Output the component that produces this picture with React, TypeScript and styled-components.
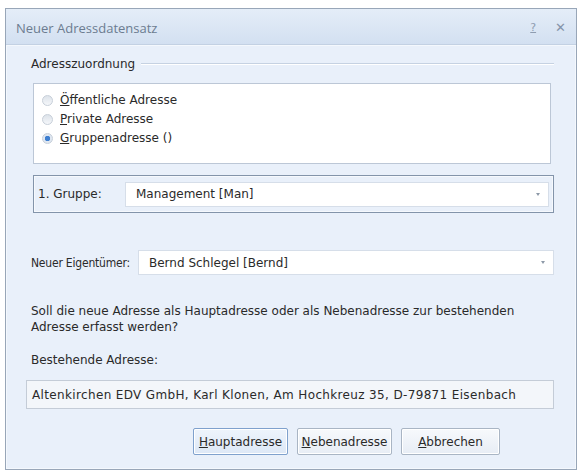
import React from "react";
import styled, { createGlobalStyle } from "styled-components";

const GlobalStyle = createGlobalStyle`
  html, body {
    margin: 0;
    padding: 0;
    background: #ffffff;
  }
  body {
    font-family: "DejaVu Sans", "Open Sans", sans-serif;
    font-size: 12px;
    line-height: 14px;
    color: #2a2a2a;
  }
`;

interface RadioOption {
  key: string;
  label: string;
  checked?: boolean;
}

const options: RadioOption[] = [
  { key: "Ö", label: "ffentliche Adresse" },
  { key: "P", label: "rivate Adresse" },
  { key: "G", label: "ruppenadresse ()", checked: true },
];

export default function App() {
  return (
    <>
      <GlobalStyle />
      <Page>
        <Window>
          <TitleBar>
            <Title>Neuer Adressdatensatz</Title>
            <TitleButtons>
              <HelpIcon>?</HelpIcon>
              <CloseIcon>✕</CloseIcon>
            </TitleButtons>
          </TitleBar>
          <Body>
            <GroupHeader>
              <span>Adresszuordnung</span>
              <HeaderLine />
            </GroupHeader>

            <RadioPanel>
              {options.map((o) => (
                <RadioRow key={o.key}>
                  <Radio checked={o.checked} />
                  <span>
                    <u>{o.key}</u>
                    {o.label}
                  </span>
                </RadioRow>
              ))}
            </RadioPanel>

            <GroupBox>
              <GroupLabel>1. Gruppe:</GroupLabel>
              <Combo>
                <span>Management [Man]</span>
                <Arrow />
              </Combo>
            </GroupBox>

            <OwnerRow>
              <OwnerLabel>Neuer Eigentümer:</OwnerLabel>
              <Combo>
                <span>Bernd Schlegel [Bernd]</span>
                <Arrow />
              </Combo>
            </OwnerRow>

            <Question>
              Soll die neue Adresse als Hauptadresse oder als Nebenadresse zur bestehenden
              <br />
              Adresse erfasst werden?
            </Question>

            <FieldLabel>Bestehende Adresse:</FieldLabel>
            <AddressBox>
              Altenkirchen EDV GmbH, Karl Klonen, Am Hochkreuz 35, D-79871 Eisenbach
            </AddressBox>

            <ButtonRow>
              <DialogButton focused>
                <u>H</u>auptadresse
              </DialogButton>
              <DialogButton>
                <u>N</u>ebenadresse
              </DialogButton>
              <DialogButton wide>
                <u>A</u>bbrechen
              </DialogButton>
            </ButtonRow>
          </Body>
        </Window>
      </Page>
    </>
  );
}

const Page = styled.div`
  padding: 8px 5px 3px 5px;
  height: 473px;
  box-sizing: border-box;
`;

const Window = styled.div`
  height: 100%;
  box-sizing: border-box;
  border: 1px solid #98a6b8;
  display: flex;
  flex-direction: column;
  background: #e9f0fa;
`;

const TitleBar = styled.div`
  height: 35px;
  flex-shrink: 0;
  display: flex;
  align-items: center;
  justify-content: space-between;
  padding: 0 10px 0 10px;
  background: linear-gradient(#e4edf8, #d3e0f1);
  border-bottom: 1px solid #c3d1e3;
`;

const Title = styled.div`
  font-family: "Open Sans", sans-serif;
  font-size: 13px;
  color: #6c7c90;
  padding-top: 2px;
`;

const TitleButtons = styled.div`
  display: flex;
  align-items: center;
  gap: 19px;
  padding-top: 2px;
`;

const HelpIcon = styled.span`
  font-size: 11px;
  color: #8e9cb0;
  text-decoration: underline;
`;

const CloseIcon = styled.span`
  font-size: 13px;
  color: #8594aa;
`;

const Body = styled.div`
  flex: 1;
  display: flex;
  flex-direction: column;
  padding: 11px 21px 0 19px;
  border: 1px solid #f4f8fd;
`;

const GroupHeader = styled.div`
  display: flex;
  align-items: center;
  gap: 6px;
  height: 14px;
  padding-left: 5px;
`;

const HeaderLine = styled.div`
  flex: 1;
  border-top: 1px solid #c6d2e2;
  border-bottom: 1px solid #ffffff;
`;

const RadioPanel = styled.div`
  margin: 12px 3px 0 7px;
  height: 81px;
  box-sizing: border-box;
  background: #ffffff;
  border: 1px solid #bcc7d6;
  padding: 8px 0 0 8px;
  display: flex;
  flex-direction: column;
  gap: 3px;
`;

const RadioRow = styled.div`
  display: flex;
  align-items: center;
  gap: 7px;
  height: 16px;
`;

const Radio = styled.span<{ checked?: boolean }>`
  width: 9px;
  height: 9px;
  border-radius: 50%;
  border: 1px solid #c7cfd9;
  background: ${(p) =>
    p.checked
      ? "radial-gradient(circle, #3e7fd0 0 2.5px, #dfe7f1 3px)"
      : "linear-gradient(#dde3ea, #f5f7fa)"};
`;

const GroupBox = styled.div`
  margin: 11px 0 0 7px;
  height: 38px;
  box-sizing: border-box;
  border: 1px solid #8394aa;
  box-shadow: inset 0 0 0 1px #f6f9fd;
  display: flex;
  align-items: center;
  padding: 0 4px 0 4px;
`;

const GroupLabel = styled.div`
  width: 87px;
  flex-shrink: 0;
`;

const Combo = styled.div`
  flex: 1;
  height: 25px;
  box-sizing: border-box;
  background: #ffffff;
  border: 1px solid #d6dee9;
  display: flex;
  align-items: center;
  justify-content: space-between;
  padding: 0 8px 0 10px;
`;

const Arrow = styled.span`
  width: 0;
  height: 0;
  border-left: 2px solid transparent;
  border-right: 2px solid transparent;
  border-top: 3px solid #8d99a8;
`;

const OwnerRow = styled.div`
  margin-top: 37px;
  display: flex;
  align-items: center;
  padding-left: 5px;
`;

const OwnerLabel = styled.div`
  width: 107px;
  flex-shrink: 0;
  white-space: nowrap;
  font-family: "DejaVu Sans Condensed", "DejaVu Sans", sans-serif;
  font-stretch: condensed;
  letter-spacing: -0.2px;
`;

const Question = styled.div`
  margin-top: 28px;
  padding-left: 5px;
  line-height: 16px;
  white-space: nowrap;
`;

const FieldLabel = styled.div`
  margin-top: 18px;
  padding-left: 5px;
`;

const AddressBox = styled.div`
  margin-top: 13px;
  height: 29px;
  box-sizing: border-box;
  background: #f3f6fa;
  border: 1px solid #c4ccd7;
  display: flex;
  align-items: center;
  padding-left: 5px;
  white-space: nowrap;
  letter-spacing: 0.35px;
`;

const ButtonRow = styled.div`
  margin-top: 19px;
  display: flex;
  justify-content: flex-end;
  gap: 9px;
  padding-right: 54px;
`;

const DialogButton = styled.button<{ focused?: boolean; wide?: boolean }>`
  width: ${(p) => (p.wide ? 99 : 95)}px;
  height: 27px;
  font-family: inherit;
  font-size: 12px;
  color: #2a2a2a;
  border-radius: 2px;
  border: 1px solid ${(p) => (p.focused ? "#7fa1cd" : "#a9b5c4")};
  background: ${(p) =>
    p.focused
      ? "linear-gradient(#eef4fc, #dde8f6)"
      : "linear-gradient(#f7f9fc, #e7edf5)"};
  box-shadow: inset 0 0 0 1px #ffffff;
  padding: 0;
`;
